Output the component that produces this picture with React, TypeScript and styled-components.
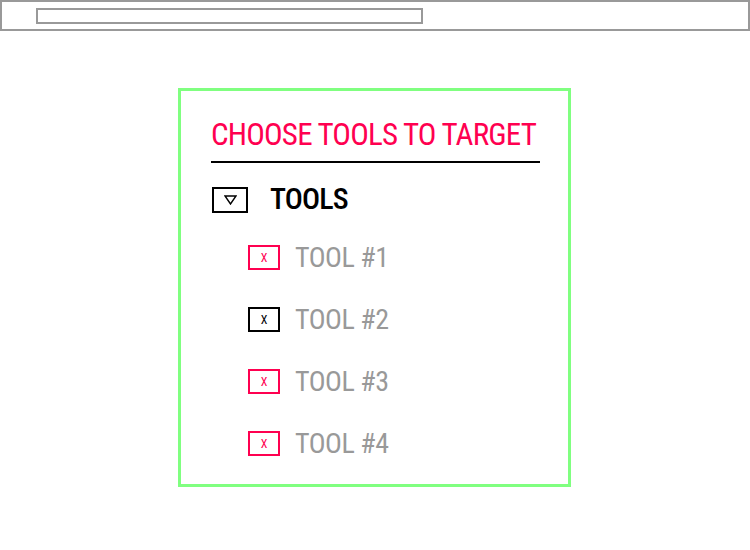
import React from 'react';
import styled, { createGlobalStyle } from 'styled-components';

const Global = createGlobalStyle`
  body {
    margin: 0;
    background: #fff;
    font-family: "Roboto Condensed", "Open Sans", sans-serif;
  }
`;

const TopBar = styled.div`
  box-sizing: border-box;
  height: 31px;
  border: 2px solid #999;
  padding: 6px 0 0 34px;
`;

const UrlField = styled.div`
  box-sizing: border-box;
  width: 387px;
  height: 16px;
  border: 2px solid #999;
`;

const Panel = styled.section`
  box-sizing: border-box;
  width: 393px;
  height: 399px;
  margin: 57px 0 0 178px;
  border: 3px solid #80ff80;
  padding: 28px 0 0 30px;
  display: flex;
  flex-direction: column;
  align-items: flex-start;
`;

const Heading = styled.h1`
  margin: 0;
  padding: 0 4px 11px 0;
  border-bottom: 2px solid #000;
  font-size: 31px;
  font-weight: 400;
  line-height: 1;
  letter-spacing: -0.8px;
  color: #ff0050;
  white-space: nowrap;
`;

const Group = styled.div`
  display: flex;
  align-items: flex-start;
  gap: 22px;
  height: 30px;
  margin: 21px 0 0 1px;
`;

const Toggle = styled.button`
  box-sizing: border-box;
  width: 36px;
  height: 26px;
  margin-top: 3px;
  border: 2px solid #000;
  background: #fff;
  padding: 0;
  display: flex;
  align-items: center;
  justify-content: center;
`;

const GroupLabel = styled.span`
  font-size: 30px;
  font-weight: 500;
  line-height: 1;
  letter-spacing: -0.8px;
  color: #000;
`;

const List = styled.ul`
  list-style: none;
  margin: 31px 0 0 37px;
  padding: 0;
  display: flex;
  flex-direction: column;
  gap: 37px;
`;

const Item = styled.li`
  display: flex;
  align-items: center;
  gap: 15px;
  height: 25px;
`;

const Check = styled.span<{ $active?: boolean }>`
  box-sizing: border-box;
  width: 32px;
  height: 25px;
  border: 2px solid ${p => (p.$active ? '#000' : '#ff0050')};
  color: ${p => (p.$active ? '#000' : '#ff0050')};
  display: flex;
  align-items: center;
  justify-content: center;
  font-size: 12px;
  font-weight: 400;
  line-height: 1;
`;

const ItemLabel = styled.span`
  font-size: 28px;
  font-weight: 400;
  line-height: 1;
  letter-spacing: -0.45px;
  color: #999;
`;

const tools = [
  { name: 'TOOL #1', active: false },
  { name: 'TOOL #2', active: true },
  { name: 'TOOL #3', active: false },
  { name: 'TOOL #4', active: false },
];

export default function App() {
  return (
    <>
      <Global />
      <TopBar>
        <UrlField />
      </TopBar>
      <Panel>
        <Heading>CHOOSE TOOLS TO TARGET</Heading>
        <Group>
          <Toggle aria-label="collapse">
            <svg width="13" height="10" viewBox="0 0 13 10">
              <polygon points="1,1 12,1 6.5,9" fill="none" stroke="#000" strokeWidth="1.4" />
            </svg>
          </Toggle>
          <GroupLabel>TOOLS</GroupLabel>
        </Group>
        <List>
          {tools.map(t => (
            <Item key={t.name}>
              <Check $active={t.active}>X</Check>
              <ItemLabel>{t.name}</ItemLabel>
            </Item>
          ))}
        </List>
      </Panel>
    </>
  );
}
